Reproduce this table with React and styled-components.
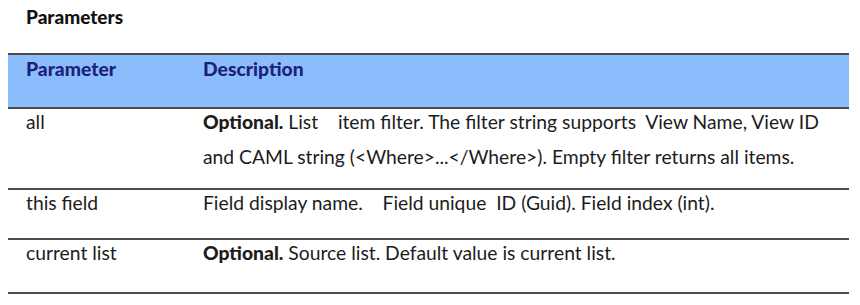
import React from 'react';
import styled, { createGlobalStyle } from 'styled-components';

const GlobalStyle = createGlobalStyle`
  body {
    margin: 0;
    background: #fff;
    font-family: Lato, "Open Sans", sans-serif;
    color: #1c1c1c;
  }
`;

const Page = styled.div`
  padding: 7px 11px 0 8px;
  width: 841px;
`;

const Title = styled.h3`
  margin: 0 0 0 18px;
  height: 46px;
  line-height: 20px;
  font-size: 19px;
  font-weight: 900;
  color: #111;
`;

const Table = styled.div`
  border-top: 2px solid #4b4b4b;
  border-bottom: 2px solid #4b4b4b;
`;

const Row = styled.div`
  display: grid;
  grid-template-columns: 177px 1fr;
  height: ${({ $h }) => $h}px;
  background: ${({ $head }) => ($head ? '#8bbdfd' : 'transparent')};
  border-top: ${({ $first }) => ($first ? 'none' : '2px solid #4b4b4b')};
  box-sizing: border-box;
  overflow: hidden;
`;

const Cell = styled.div`
  padding: 0 18px;
  font-size: 19.3px;
  line-height: 35px;
  margin-top: ${({ $head }) => ($head ? '-4px' : '-5px')};
  font-weight: ${({ $head }) => ($head ? 900 : 400)};
  color: ${({ $head }) => ($head ? '#1d1f7a' : '#1c1c1c')};
  white-space: pre-wrap;
`;

const Strong = styled.b`
  font-weight: 900;
`;

const rows = [
  {
    name: 'all',
    h: 81,
    desc: (
      <>
        <Strong>Optional.</Strong> List    item filter. The filter string supports  View Name, View ID
        {'\n'}and CAML string (&lt;Where&gt;...&lt;/Where&gt;). Empty filter returns all items.
      </>
    ),
  },
  { name: 'this field', h: 50, desc: 'Field display name.    Field unique  ID (Guid). Field index (int).' },
  {
    name: 'current list',
    h: 54,
    desc: (
      <>
        <Strong>Optional.</Strong> Source list. Default value is current list.
      </>
    ),
  },
];

export default function App() {
  return (
    <>
      <GlobalStyle />
      <Page>
        <Title>Parameters</Title>
        <Table>
          <Row $head $first $h={52}>
            <Cell $head>Parameter</Cell>
            <Cell $head>Description</Cell>
          </Row>
          {rows.map((r) => (
            <Row key={r.name} $h={r.h}>
              <Cell>{r.name}</Cell>
              <Cell>{r.desc}</Cell>
            </Row>
          ))}
        </Table>
      </Page>
    </>
  );
}
